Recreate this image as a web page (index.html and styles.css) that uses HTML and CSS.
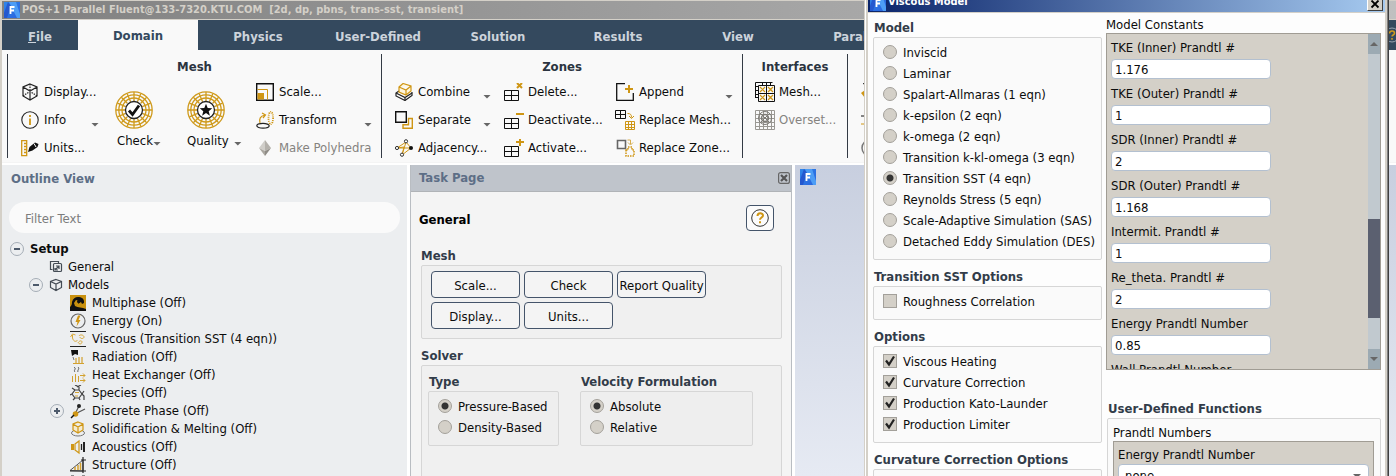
FILE: index.html
```html
<!DOCTYPE html>
<html lang="en">
<head>
<meta charset="utf-8">
<title>POS+1 Parallel Fluent</title>
<link rel="stylesheet" href="styles.css">
</head>
<body>
<svg class="defs" aria-hidden="true">
  <defs>
    <linearGradient id="lg" x1="0" y1="0" x2="1" y2="1"><stop offset="0" stop-color="#2f86ea"/><stop offset="1" stop-color="#2a63dd"/></linearGradient>
    <symbol id="logo" viewBox="0 0 16 16"><rect width="16" height="16" fill="url(#lg)"/><path d="M5 0h7l4 12v4h-3z" fill="#4d9df5"/><path d="M4 0L0 11v5h3L7 4z" fill="#2458cf"/><path d="M6.500 12V5h4M6.500 8.500h3.500" stroke="#fff" stroke-width="1.800" fill="none"/></symbol>
    <symbol id="wheel" viewBox="0 0 38 38"><g fill="none" stroke="#cf9a1c" stroke-width="1.300"><circle cx="19" cy="19" r="18.200"/><circle cx="19" cy="19" r="15.200"/><circle cx="19" cy="19" r="12"/><path d="M19 1v9M19 28v9M1 19h9M28 19h9M12.100 2.400l3.500 8.300M22.400 27.300l3.500 8.300M2.400 12.100l8.300 3.500M27.300 22.400l8.300 3.500M25.900 2.400l-3.500 8.300M15.600 27.300l-3.500 8.300M35.600 12.100l-8.300 3.500M10.700 22.400l-8.300 3.500M6.300 6.300l6 6M25.700 25.700l6 6M31.700 6.300l-6 6M12.300 25.700l-6 6"/></g><circle cx="19" cy="19" r="8.500" fill="#fff" stroke="#222" stroke-width="1.300"/></symbol>
    <symbol id="grid4" viewBox="0 0 18 18"><path d="M.5 7.500h14v10H.5zM7.500 7.500v10M.5 12.500h14" fill="none" stroke="#111"/></symbol>
  </defs>
</svg>
<div class="app">
  <header class="titlebar"><svg class="i16"><use href="#logo"/></svg><span>POS+1 Parallel Fluent@133-7320.KTU.COM&nbsp; [2d, dp, pbns, trans-sst, transient]</span></header>
  <nav class="tabs">
    <button class="tab file"><u>F</u>ile</button><button class="tab active">Domain</button><button class="tab">Physics</button><button class="tab">User-Defined</button><button class="tab">Solution</button><button class="tab">Results</button><button class="tab">View</button><button class="tab">Parallel</button>
    <button class="tabs-help" aria-label="Help"><svg viewBox="0 0 16 16"><circle cx="8" cy="8" r="7" fill="none" stroke="#9aa4b0"/><path d="M5.500 6.500c0-3.500 5-3 5-.3 0 1.800-2.500 1.700-2.500 3.300M8 11v1.800" fill="none" stroke="#cf9a1c" stroke-width="1.600"/></svg></button>
  </nav>
  <div class="ribbon">
    <section class="group g-mesh">
      <h2>Mesh</h2>
      <div class="cols">
        <div class="col">
          <button class="tool"><svg viewBox="0 0 18 18" fill="none" stroke="#222" stroke-width="1.200"><path d="M9 1l7 3v9l-7 4-7-4V4zM2 4l7 4 7-4M9 8v9"/><path d="M9 1v6M2 13l6-4M16 13l-6-4" stroke-dasharray="1.500 1"/></svg>Display...</button>
          <button class="tool"><svg viewBox="0 0 18 18"><circle cx="9" cy="9" r="8.200" fill="none" stroke="#222" stroke-width="1.100"/><path d="M9 7.500V14M9 4v2" stroke="#cf9614" stroke-width="1.800"/></svg>Info<i class="caret"></i></button>
          <button class="tool"><svg viewBox="0 0 18 18"><path d="M.7 1.700h5v15h-5zM3 4.500h2.700M3 7.500h2.700M3 10.500h2.700M3 13.500h2.700" fill="none" stroke="#cf9614" stroke-width="1.300"/><path d="M7 13l1.500-5L14 3.500l3.500 1.500-1 3-5 3.500z" fill="#111"/><path d="M13 4.500l2 3.500" stroke="#fff"/></svg>Units...</button>
        </div>
        <div class="col">
          <button class="big"><svg class="i38" viewBox="0 0 38 38"><use href="#wheel"/><path d="M14 19.500l3.500 4 6.500-9" fill="none" stroke="#111" stroke-width="2.800"/></svg><span>Check<i class="caret"></i></span></button>
        </div>
        <div class="col">
          <button class="big quality"><svg class="i38" viewBox="0 0 38 38"><use href="#wheel"/><path d="M19 12.800l1.700 4.300 4.600.2-3.600 2.900 1.200 4.500-3.900-2.600-3.900 2.600 1.200-4.500-3.600-2.900 4.600-.2z" fill="#111"/></svg><span>Quality<i class="caret"></i></span></button>
        </div>
        <div class="col">
          <button class="tool"><svg viewBox="0 0 18 18" fill="none"><path d="M.7.700h16.600v16.600H.700z" stroke="#111" stroke-width="1.400"/><path d="M1.500 6.500h10v10" stroke="#cf9614"/><path d="M1.500 10H8v6.500H1.500z" fill="#cf9614"/></svg>Scale...</button>
          <button class="tool"><svg viewBox="0 0 18 18" fill="none"><ellipse cx="7" cy="14.800" rx="6.200" ry="2.400" stroke="#222" stroke-width="1.200"/><ellipse cx="14.800" cy="7" rx="2.300" ry="6.200" stroke="#cf9614" stroke-dasharray="1 1" stroke-width="1.800"/><path d="M4 12c-1-4 0-7 5-8M6 2l3.500 2L7 7" stroke="#cf9614" stroke-width="1.200"/></svg>Transform<i class="caret"></i></button>
          <button class="tool off" disabled><svg viewBox="0 0 18 18"><path d="M9 1L3 9l6 3z" fill="#d0cec9"/><path d="M9 1l6 8-6 3z" fill="#b4b1ab"/><path d="M3 9l6 8v-5z" fill="#aaa7a0"/><path d="M15 9l-6 8v-5z" fill="#8f8c86"/></svg>Make Polyhedra</button>
        </div>
      </div>
    </section>
    <section class="group g-zones">
      <h2>Zones</h2>
      <div class="cols">
        <div class="col">
          <button class="tool"><svg viewBox="0 0 18 18" fill="none" stroke-width="1.200"><path d="M4 8L1 10v3l9 4.500 7-5V9" stroke="#222"/><path d="M1 10l9 4.500 7-4.500M10 14.500v3" stroke="#222"/><path d="M4 4l4-3.500L16 3v5l-5 4-7-3zM4 4l7 3 5-4M11 7v5" stroke="#cf9614" fill="#fff6dc"/></svg>Combine<i class="caret"></i></button>
          <button class="tool"><svg viewBox="0 0 18 18" fill="none" stroke-width="1.400"><path d="M.7.700h10.600v10.600H.7z" stroke="#111"/><path d="M13.500 7.500h3.800v9.800H8v-3.500h5.500z" stroke="#cf9614"/></svg>Separate<i class="caret"></i></button>
          <button class="tool"><svg viewBox="0 0 18 18" fill="none"><path d="M2 9l9-6-4 13 2-8zM2 9h14M11 3l5 6-9 7" stroke="#cf9614"/><g fill="#fff" stroke="#333"><circle cx="11" cy="2.300" r="1.600"/><circle cx="2" cy="9" r="1.600"/><circle cx="7" cy="15.700" r="1.600"/></g><circle cx="16" cy="9" r="2" fill="#111"/></svg>Adjacency...</button>
        </div>
        <div class="col">
          <button class="tool w"><svg viewBox="0 0 20 18" class="wide"><use href="#grid4" width="18" height="18"/><path d="M13 0l5 5M18 0l-5 5" stroke="#cf9614" stroke-width="2"/></svg>Delete...</button>
          <button class="tool w"><svg viewBox="0 0 20 18" class="wide"><use href="#grid4" width="18" height="18"/><path d="M12 3h8" stroke="#cf9614" stroke-width="2"/></svg>Deactivate...</button>
          <button class="tool w"><svg viewBox="0 0 20 18" class="wide"><use href="#grid4" width="18" height="18"/><path d="M12 3h8M16 0v7" stroke="#cf9614" stroke-width="2"/></svg>Activate...</button>
        </div>
        <div class="col">
          <button class="tool"><svg viewBox="0 0 18 18" fill="none"><path d="M9 .7H.7v16.600h16.600V10" stroke="#111" stroke-width="1.300"/><path d="M9 6h8M13 2v8" stroke="#cf9614" stroke-width="2"/></svg>Append<i class="caret"></i></button>
          <button class="tool"><svg viewBox="0 0 20 20" class="i20" fill="none"><path d="M.5.500h10v8H.5zM5.500.5v8M.5 4.500h10" stroke="#111"/><path d="M10.500 11.500h9v8h-9zM13.500 11.500v8M16.500 11.500v8M10.500 14.500h9M10.500 17.500h9M12.500 3.500c3 0 4 1 4 4M14 6l2.500 2.500L19 6" stroke="#cf9614"/></svg>Replace Mesh...</button>
          <button class="tool"><svg viewBox="0 0 20 20" class="i20" fill="none"><path d="M2.500 2.500h8v8h-8z" stroke="#666" stroke-width="1.600"/><path d="M11 12h2V9h4v3h2v6h-8z" stroke="#cf9614" stroke-width="1.500" stroke-dasharray="1.500 1"/><path d="M12.500 2h3v4M13 4.500l2.500 2.500L18 4.500" stroke="#d6ad4e"/></svg>Replace Zone...</button>
        </div>
      </div>
    </section>
    <section class="group g-int">
      <h2>Interfaces</h2>
      <div class="cols"><div class="col">
        <button class="tool"><svg viewBox="0 0 20 20" class="i20" fill="none"><path d="M.5 16V.500h17M3.500 3.500h16v16h-16zM.5 4.500h3M.5 8.500h3M.5 12.500h3M.5 15.500h3M7.500.5v3M11.500.5v3M15.500.5v3M3.500 11.500h16M11.500 3.500v16" stroke="#111"/><path d="M5 5l5 5M10 5l-5 5M13 5l5 5M18 5l-5 5M5 13l5 5M10 13l-5 5M13 13l5 5M18 13l-5 5" stroke="#cf9614" stroke-width="1.200"/></svg>Mesh...</button>
        <button class="tool off" disabled><svg viewBox="0 0 20 20" class="i20" fill="none" stroke="#9a9893"><path d="M.5.500h19v19H.500zM4.500.5v19M8.500.5v19M12.500.5v19M16.500.5v19M.5 4.500h19M.5 8.500h19M.5 12.500h19M.5 16.500h19"/><g stroke="#7c7a75"><circle cx="10" cy="8" r="6.500"/><circle cx="10" cy="8" r="3.500" stroke-width="1.500"/><path d="M5 3l10 10M15 3L5 13"/></g></svg>Overset...</button>
      </div></div>
    </section>
    <section class="group g-more">
      <div class="cols"><div class="col">
        <button class="tool" aria-label="Mesh models"><svg viewBox="0 0 18 18"><path d="M2 .7h14" stroke="#111"/><path d="M0 10l4-3v8z" fill="#cf9614"/></svg></button>
        <button class="tool" aria-label="Turbo"><svg viewBox="0 0 18 18"><path d="M0 5h16" stroke="#111"/><path d="M0 13h16" stroke="#cf9614"/></svg></button>
        <button class="tool" aria-label="Adapt"><svg viewBox="0 0 18 18"><circle cx="9" cy="9" r="8" fill="none" stroke="#777" stroke-width="1.500"/></svg></button>
      </div></div>
    </section>
  </div>
  <main class="main">
    <aside class="outline">
      <h2 class="pane-title">Outline View</h2>
      <input class="filter" type="text" placeholder="Filter Text" aria-label="Filter Text">
      <ul class="tree">
        <li><button class="tog" aria-label="Collapse"></button><b>Setup</b></li>
        <li class="l1"><svg class="i14" viewBox="0 0 14 14" fill="none" stroke="#444c55" stroke-width="1.200"><path d="M3.500 9.500h-2v-8h8v2"/><rect x="4.500" y="3.500" width="8" height="8" rx="1"/><path d="M6 10l4-4M7 6h3v3M6 8v2h3"/></svg>General</li>
        <li class="l1"><button class="tog" aria-label="Collapse"></button><svg class="i14" viewBox="0 0 14 14" fill="none" stroke="#444c55" stroke-width="1.200"><path d="M7 1.500l5.500 2v6L7 12.500 1.500 9.500v-6zM1.500 3.500L7 6l5.500-2.500M7 6v6.500"/></svg>Models</li>
        <li class="l2"><svg viewBox="0 0 16 16"><rect width="16" height="16" fill="#c9910f"/><path d="M0 16v-4c1-1 2-2 2-5C3 3 6 1.500 9 2c4 .5 5.500 3 5 6l-2 1-1-2-3 2 1-3-3-1-2 3 1 3c3 2 7 1 11 3v2z" fill="#111"/><circle cx="8.500" cy="6.500" r="1.500" fill="#111"/></svg>Multiphase (Off)</li>
        <li class="l2"><svg viewBox="0 0 16 16"><circle cx="8" cy="8" r="7" fill="none" stroke="#666" stroke-width="1.200"/><path d="M8 2.500L5.500 9h2L6.500 13.500 10.500 7H8.500L10.500 2.500z" fill="#cf9614"/></svg>Energy (On)</li>
        <li class="l2"><svg viewBox="0 0 16 16" fill="none"><path d="M0 .5h16M0 15.500h16" stroke="#222"/><path d="M2.500 4v3c1 4 4 4 5 2M.5 6l2-3 3 1M9 5c1-2 5-1 5 1s-4 2-4 0M8 11c1 3 4 2 4 0s-3-1-3 0" stroke="#d9a93a"/></svg>Viscous (Transition SST (4 eqn))</li>
        <li class="l2"><svg viewBox="0 0 16 16"><path d="M1 1h7v5L5 5 2 7z" fill="#111"/><path d="M3 8l1 3" stroke="#777"/><path d="M3 14.500h11M6 14V9M9 14V8M12 14V8" stroke="#d3a12e" stroke-width="1.200"/></svg>Radiation (Off)</li>
        <li class="l2"><svg viewBox="0 0 16 16" fill="none"><path d="M4 0c3 2-1 3 1 5M8 0c2 2-1 3 0 5" stroke="#555"/><path d="M2.500 15V9M5.500 15V7M8.500 15V9M10 8.500h5M10 13.500h5M13 6.500l2 2-2 2M13 11.500l2 2-2 2" stroke="#d3a12e"/></svg>Heat Exchanger (Off)</li>
        <li class="l2"><svg viewBox="0 0 16 16" fill="none" stroke="#444" stroke-width="1.200"><path d="M5 5h4l3 4-3 4H5L2 9zM9 5V2M5 5L2 3M2 9L0 10M5 13l-2 2M12 9l2 2v4M12 9l2-3M9 2L5 0M7 2l4-2M9 13l1 2"/><path d="M5 7.500h4M5 11h3" stroke="#d3a12e"/></svg>Species (Off)</li>
        <li class="l2"><button class="tog plus" aria-label="Expand"></button><svg viewBox="0 0 16 16"><path d="M5 11L9 3M5 11l10-5" stroke="#555" stroke-width="1.200"/><circle cx="9" cy="3" r="2" fill="#222"/><circle cx="5.500" cy="11" r="2.800" fill="#cf9614"/><path d="M1 15l3-3" stroke="#111" stroke-width="1.500"/></svg>Discrete Phase (Off)</li>
        <li class="l2"><svg viewBox="0 0 16 16" fill="none"><ellipse cx="8" cy="12" rx="6.500" ry="3" stroke="#777"/><path d="M8 1l5 2v6l-5 3-5-3V3zM3 3l5 3 5-3M8 6v6" stroke="#cf9614" stroke-width="1.200" fill="#f5ebcf"/></svg>Solidification &amp; Melting (Off)</li>
        <li class="l2"><svg viewBox="0 0 16 16" fill="none"><path d="M1 5h3v6H1z" fill="#cf9614"/><path d="M5 5l4-3v12l-4-3z" stroke="#cf9614" stroke-width="1.200"/><path d="M11.500 5v6" stroke="#222" stroke-width="1.300"/><path d="M14 3v10" stroke="#222" stroke-width="2"/></svg>Acoustics (Off)</li>
        <li class="l2"><svg viewBox="0 0 16 16" fill="none"><path d="M0 13.500L13 3v11z" stroke="#555"/><path d="M5 13v-3M8 13V8M10.500 13V6" stroke="#d3a12e" stroke-width="1.500"/><path d="M13 0v16M11 3h5M0 14h16" stroke="#222" stroke-width="1.200"/></svg>Structure (Off)</li>
        <li class="l2"><svg viewBox="0 0 16 16" fill="none" stroke="#333"><path d="M1 1h3v3H1zM12 1h3v3h-3zM6 2h4M1 8h14"/></svg></li>
      </ul>
    </aside>
    <section class="task">
      <header class="task-head"><h2 class="pane-title">Task Page</h2><button class="close" aria-label="Close"><svg viewBox="0 0 12 12"><rect x=".6" y=".6" width="10.800" height="10.800" rx="2" fill="none" stroke="#666" stroke-width="1.200"/><path d="M3 3l6 6M9 3L3 9" stroke="#555" stroke-width="2.200"/></svg></button></header>
      <div class="task-body">
        <div class="gen-row"><h3 class="black">General</h3><button class="help" aria-label="Help"><svg viewBox="0 0 18 18"><circle cx="9" cy="9" r="8.300" fill="none" stroke="#333"/><path d="M6.500 7c0-3.500 5.500-3.500 5.500-.5 0 2-3 2-3 4.300M9 12.200v2" fill="none" stroke="#cf9614" stroke-width="2"/></svg></button></div>
        <h3>Mesh</h3>
        <div class="box btns"><button>Scale...</button><button>Check</button><button>Report Quality</button><button>Display...</button><button>Units...</button></div>
        <h3>Solver</h3>
        <div class="box solver">
          <div class="sub type"><h3>Type</h3><div class="box opts"><label><input type="radio" name="type" checked>Pressure-Based</label><label><input type="radio" name="type">Density-Based</label></div></div>
          <div class="sub velocity"><h3>Velocity Formulation</h3><div class="box opts"><label><input type="radio" name="vel" checked>Absolute</label><label><input type="radio" name="vel">Relative</label></div></div>
        </div>
      </div>
    </section>
    <section class="graphics"><svg class="i16"><use href="#logo"/></svg></section>
  </main>
</div>
<div class="dialog" role="dialog" aria-label="Viscous Model">
  <header class="dlg-title"><svg class="i16"><use href="#logo"/></svg><span>Viscous Model</span><button aria-label="Close"><svg viewBox="0 0 10 10"><path d="M1.500 1.500l7 7M8.500 1.500l-7 7" stroke="#000" stroke-width="1.800"/></svg></button></header>
  <div class="dlg-body">
    <div class="left">
      <h3>Model</h3>
      <div class="box opts models">
        <label><input type="radio" name="model">Inviscid</label>
        <label><input type="radio" name="model">Laminar</label>
        <label><input type="radio" name="model">Spalart-Allmaras (1 eqn)</label>
        <label><input type="radio" name="model">k-epsilon (2 eqn)</label>
        <label><input type="radio" name="model">k-omega (2 eqn)</label>
        <label><input type="radio" name="model">Transition k-kl-omega (3 eqn)</label>
        <label><input type="radio" name="model" checked>Transition SST (4 eqn)</label>
        <label><input type="radio" name="model">Reynolds Stress (5 eqn)</label>
        <label><input type="radio" name="model">Scale-Adaptive Simulation (SAS)</label>
        <label><input type="radio" name="model">Detached Eddy Simulation (DES)</label>
      </div>
      <h3>Transition SST Options</h3>
      <div class="box opts"><label><input type="checkbox">Roughness Correlation</label></div>
      <h3>Options</h3>
      <div class="box opts checks">
        <label><input type="checkbox" checked>Viscous Heating</label>
        <label><input type="checkbox" checked>Curvature Correction</label>
        <label><input type="checkbox" checked>Production Kato-Launder</label>
        <label><input type="checkbox" checked>Production Limiter</label>
      </div>
      <h3>Curvature Correction Options</h3>
      <div class="box opts"></div>
    </div>
    <div class="right">
      <div class="cap">Model Constants</div>
      <div class="constants">
        <div class="fields">
          <label>TKE (Inner) Prandtl #<input type="text" value="1.176"></label>
          <label>TKE (Outer) Prandtl #<input type="text" value="1"></label>
          <label>SDR (Inner) Prandtl #<input type="text" value="2"></label>
          <label>SDR (Outer) Prandtl #<input type="text" value="1.168"></label>
          <label>Intermit. Prandtl #<input type="text" value="1"></label>
          <label>Re_theta. Prandtl #<input type="text" value="2"></label>
          <label>Energy Prandtl Number<input type="text" value="0.85"></label>
          <label>Wall Prandtl Number<input type="text" value="0.85"></label>
        </div>
        <div class="scroll"><button aria-label="Scroll up"><i class="caret up"></i></button><div class="track"><div class="thumb"></div></div><button aria-label="Scroll down"><i class="caret"></i></button></div>
      </div>
      <h3>User-Defined Functions</h3>
      <div class="box udf">
        <div class="cap">Prandtl Numbers</div>
        <div class="inner"><label for="epn">Energy Prandtl Number</label><div class="pick"><select id="epn"><option>none</option></select><i class="caret"></i></div></div>
      </div>
    </div>
  </div>
</div>
</body>
</html>
```

FILE: styles.css
```css
* { box-sizing: border-box; }
html, body { margin: 0; height: 100%; }
body {
  position: relative;
  overflow: hidden;
  font: 13px/18px "DejaVu Sans Condensed", "DejaVu Sans", sans-serif;
  color: #0c0c0c;
  background: #fff;
}
button, input, select { font: inherit; color: inherit; }
button { margin: 0; padding: 0; border: 0; background: none; }
h2, h3 { margin: 0; font-size: 13px; line-height: 18px; font-weight: bold; color: #323c49; white-space: nowrap; }
svg { display: block; flex: none; }
.defs { position: absolute; width: 0; height: 0; }
.i16 { width: 16px; height: 16px; }

.caret {
  display: block;
  flex: none;
  width: 8px;
  height: 4px;
  background: #666;
  clip-path: polygon(0 0, 100% 0, 50% 100%);
}
.caret.up { clip-path: polygon(50% 0, 100% 100%, 0 100%); }

.app { display: flex; flex-direction: column; height: 100vh; border-left: 2px solid #d4d0c8; }
.titlebar {
  display: flex;
  align-items: center;
  gap: 2px;
  height: 20px;
  flex: none;
  padding-left: 2px;
  border-top: 1px solid #d4d0c8;
  border-bottom: 1px solid #d4d0c8;
  background: linear-gradient(90deg, #808080, #c0c0c0);
  color: #d4d0c8;
  font-size: 11px;
  font-weight: bold;
  white-space: nowrap;
}

.tabs { display: flex; flex: none; height: 30px; background: #34495e; overflow: hidden; }
.tab { flex: none; width: 120px; padding-top: 4px; color: #ccd3db; font-weight: bold; }
.tab.file { width: 76px; }
.tab.active { padding-top: 2px; background: #f9f9f9; color: #34495e; }
.tabs-help { display: flex; align-items: center; margin-left: auto; padding-right: 2px; }
.tabs-help svg { width: 16px; height: 16px; margin-right: -6px; }

.ribbon { display: flex; flex: none; padding: 4px 0 4px 5px; background: #f9f9f9; border-bottom: 1px solid #f4f4f4; }
.group { flex: none; height: 104px; border-left: 1px solid #333a44; }
.group h2 { padding-top: 4px; text-align: center; color: #2b3440; }
.g-mesh { width: 374px; }
.g-zones { width: 361px; }
.g-int { width: 105px; }
.g-more { flex: 1; padding-top: 22px; }
.cols { display: flex; padding: 2px 0 0 13px; }
.g-int .cols { padding-left: 12px; }
.col { display: flex; flex-direction: column; flex: none; }
.tool { display: flex; align-items: center; gap: 5px; height: 28px; white-space: nowrap; }
.tool svg { width: 18px; height: 18px; }
.tool svg.wide { width: 20px; height: 18px; }
.tool svg.i20 { width: 20px; height: 20px; margin-right: -1px; }
.tool .caret { margin: 9px 0 0 auto; }
.tool.off { color: #85837f; }
.g-mesh .col:nth-child(1) { width: 78px; margin-right: 16px; }
.g-mesh .col:nth-child(2) { width: 72px; }
.g-mesh .col:nth-child(3) { width: 69px; }
.g-mesh .col:nth-child(4) { width: 116px; }
.g-zones .col:nth-child(1) { width: 96px; margin-right: 13px; }
.g-zones .col:nth-child(2) { width: 99px; margin-right: 13px; }
.g-zones .col:nth-child(3) { width: 117px; }
.g-zones .i20 { margin-left: -1px; }
.tool.w { gap: 4px; }
.big { display: flex; flex-direction: column; align-items: flex-start; gap: 3px; padding-top: 13px; white-space: nowrap; }
.big .i38 { width: 38px; height: 38px; }
.big span { display: flex; align-items: center; padding-left: 2px; }
.big .caret { margin-top: 5px; }
.big.quality span { padding-left: 0; gap: 5px; }

.main { display: flex; flex: 1; min-height: 0; gap: 3px; margin-top: 2px; overflow: hidden; }
.pane-title { color: #5d6e86; }
.outline { flex: none; width: 405px; padding: 5px 7px 0; background: #eceef0; }
.filter {
  display: block;
  width: 100%;
  height: 31px;
  margin: 14px 0 7px;
  padding: 2px 16px 0;
  border: 0;
  border-radius: 16px;
  background: #fafafa;
}
.outline .pane-title { padding-left: 2px; }
.filter::placeholder { color: #7c7c7c; opacity: 1; }
.tree { margin: 0; padding: 0 0 0 1px; list-style: none; }
.tree li { display: flex; align-items: center; height: 18px; white-space: nowrap; }
.tree svg { width: 16px; height: 16px; margin-right: 6px; }
.tree svg.i14 { width: 14px; height: 14px; margin-right: 5px; }
.tree .l1 { padding-left: 39px; }
.tree .l2 { padding-left: 60px; }
.tog {
  width: 14px;
  height: 14px;
  flex: none;
  margin-right: 6px;
  border: 1px solid #a5adb6;
  border-radius: 50%;
  background: linear-gradient(#4d5a6b, #4d5a6b) center / 6px 2px no-repeat;
}
.tog.plus { background: linear-gradient(#4d5a6b, #4d5a6b) center / 6px 2px no-repeat, linear-gradient(#4d5a6b, #4d5a6b) center / 2px 6px no-repeat; }
.l1 .tog, .l2 .tog { margin-left: -20px; }

.task { flex: none; width: 382px; border: 1px solid #b9bdc2; border-top: 0; border-bottom: 0; background: #f4f4f4; }
.task-head { display: flex; align-items: center; justify-content: space-between; height: 27px; padding: 0 1px 0 8px; background: #bfc4cb; border-bottom: 1px solid #b0b3b7; }
.close svg { width: 12px; height: 12px; }
.task-body { padding: 13px 9px 0 10px; }
.gen-row { display: flex; align-items: center; justify-content: space-between; margin-bottom: 16px; padding-right: 8px; margin-left: -2px; }
h3.black { color: #000; padding-top: 4px; }
.help { display: flex; align-items: center; justify-content: center; width: 28px; height: 26px; border: 1px solid #44546a; border-radius: 4px; background: #fbfbfb; }
.help svg { width: 18px; height: 18px; }
.box { border: 1px solid #d6d6d6; border-radius: 2px; }
.task .box { background: #f0f0f0; }
.btns { display: grid; grid-template-columns: repeat(3, 89px); grid-auto-rows: 27px; gap: 4px; padding: 5px 9px 9px; margin-bottom: 8px; }
.btns button { border: 1px solid #44546a; border-radius: 4px; background: #f4f4f4; white-space: nowrap; padding-top: 2px; }
.solver { display: flex; gap: 21px; height: 200px; padding: 7px 6px; }
.sub h3 { padding-left: 1px; }
.type { width: 131px; }
.velocity { width: 173px; }
.opts { padding: 4px 9px; }
.task .sub .opts { height: 55px; background: #eee; }
.opts label { display: flex; align-items: center; gap: 6px; height: 21px; white-space: nowrap; padding-top: 1px; }
.opts input {
  appearance: none;
  flex: none;
  width: 14px;
  height: 14px;
  margin: 0 0 2px;
  border: 1px solid #a3a09a;
  background: #d4d0c8;
}
.opts input[type="radio"] { border-radius: 50%; }
.opts input[type="radio"]:checked { background: radial-gradient(circle, #333 3px, #d4d0c8 4px); }
.opts input[type="checkbox"]:checked { background: #d4d0c8 url("data:image/svg+xml,%3Csvg xmlns='http://www.w3.org/2000/svg' viewBox='0 0 12 12'%3E%3Cpath d='M2 5.500l3 4 5-8' fill='none' stroke='%23222' stroke-width='2.200'/%3E%3C/svg%3E") center / 12px 12px; }

.graphics { flex: 1; padding: 4px 5px; background: linear-gradient(#c8cfdf, #e6eaf3); }

.dialog {
  position: absolute;
  top: 0;
  right: 9px;
  width: 521px;
  height: 100%;
  display: flex;
  flex-direction: column;
  overflow: hidden;
  background: #fdfdfd;
  border: solid #d4d0c8;
  border-width: 0 2px;
  box-shadow: -1px 0 #fff, -2px 0 #d4d0c8, 1px 0 #808080, 2px 0 #404040;
}
.dlg-title {
  display: flex;
  align-items: flex-end;
  flex: none;
  height: 13px;
  gap: 2px;
  padding: 0 2px 1px;
  border-bottom: 1px solid #d4d0c8;
  background: linear-gradient(90deg, #0a246a, #a6caf0);
  color: #fff;
  font-size: 11px;
  font-weight: bold;
}
.dlg-title button { display: flex; align-items: center; justify-content: center; width: 16px; height: 14px; margin-left: auto; background: #d4d0c8; border: 1px solid; border-color: #fff #404040 #404040 #fff; }
.dlg-title button svg { width: 10px; height: 10px; }
.dlg-body { display: flex; flex: 1; gap: 4px; min-height: 0; padding: 0 4px 0 5px; }
.left { flex: none; width: 229px; padding-top: 6px; }
.left h3 { padding-left: 1px; }
.left .opts { min-height: 34px; margin-bottom: 8px; background: #fafafa; }
.left .models, .left .checks { padding-bottom: 7px; }
.right { flex: 1; padding-top: 3px; }
.cap { line-height: 17px; }
.constants { display: flex; height: 337px; overflow: hidden; border: 1px solid #a09c94; background: #d4d0c8; }
.fields { flex: 1; padding: 5px 4px; }
.fields label { display: block; height: 46px; line-height: 18px; }
.fields input { display: block; width: 160px; height: 20px; margin-top: 2px; padding: 1px 3px 0; border: 1px solid #b3c0d0; border-radius: 4px; background: #fff; }
.scroll { display: flex; flex-direction: column; width: 12px; }
.scroll button { display: flex; align-items: center; justify-content: center; height: 20px; background: #9caab3; }
.track { flex: 1; padding-top: 165px; background: #c1c9cf; }
.thumb { height: 99px; background: #5b6070; }
.right h3 { margin-top: 30px; padding-left: 2px; }
.udf { margin-left: 1px; height: 200px; padding: 5px 6px 0 5px; background: #fafafa; }
.inner { padding: 4px; border: 1px solid #a09c94; background: #d4d0c8; height: 120px; }
.pick { display: flex; align-items: center; position: relative; }
.pick select { appearance: none; width: 100%; height: 24px; padding: 0 6px; border: 1px solid #b3c0d0; border-radius: 4px; background: #fff; }
.pick .caret { position: absolute; right: 8px; }
```
